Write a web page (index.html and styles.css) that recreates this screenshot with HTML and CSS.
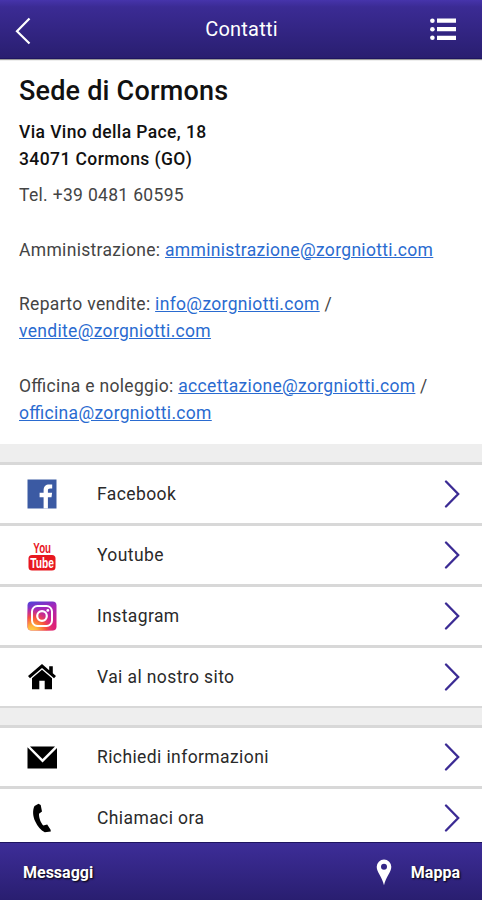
FILE: index.html
```html
<!DOCTYPE html>
<html lang="it">
<head>
    <meta charset="UTF-8">
    <meta name="viewport" content="width=device-width, initial-scale=1.0">
    <title>Contatti</title>
    <link rel="stylesheet" href="styles.css">
</head>
<body>
    <header class="topbar">
        <a class="back" href="#" aria-label="Indietro">
            <svg width="16" height="28" viewBox="0 0 16 28"><path d="M14.5 1.5 2 14.2 14.5 26.5" fill="none" stroke="#fff" stroke-width="2.2"/></svg>
        </a>
        <h1>Contatti</h1>
        <a class="menu" href="#" aria-label="Menu">
            <svg width="26" height="23" viewBox="0 0 26 23" fill="#fff">
                <circle cx="2.4" cy="2.7" r="2.3"/><circle cx="2.4" cy="11.2" r="2.3"/><circle cx="2.4" cy="19.8" r="2.3"/>
                <path d="M7 .6h19v4.2H7zM7 9.1h19v4.2H7zM7 17.7h19v4.2H7z"/>
            </svg>
        </a>
    </header>

    <main>
        <section class="info">
            <h2>Sede di Cormons</h2>
            <h3>Via Vino della Pace, 18<br>34071 Cormons (GO)</h3>
            <p>Tel. +39 0481 60595<br><br>
            Amministrazione: <a href="#">amministrazione@zorgniotti.com</a><br><br>
            Reparto vendite: <a href="#">info@zorgniotti.com</a> /<br><a href="#">vendite@zorgniotti.com</a><br><br>
            Officina e noleggio: <a href="#">accettazione@zorgniotti.com</a> /<br><a href="#">officina@zorgniotti.com</a></p>
        </section>

        <ul class="list">
            <li>
                <svg class="icon" viewBox="0 0 30 30"><path fill="#3b5aa3" d="M.5.5h29v29h-29z"/><path fill="#fff" d="M16.6 29.5V18.2h-4v-4.4h4v-2.6c0-4 2.1-5.8 5.6-5.8h3v4.1h-2.1c-1.7 0-2.2.7-2.2 2.1v2.2h4.2l-.6 4.4h-3.6v11.3z"/></svg>
                <span>Facebook</span>
                <svg class="arrow" viewBox="0 0 16 28"><path d="M2 1.5 14.2 14 2 26.5"/></svg>
            </li>
            <li>
                <svg class="icon" viewBox="0 0 30 30">
                    <rect x="1.500" y="15" width="27" height="15.500" rx="3.500" fill="#e8171f"/>
                    <text class="yt" transform="translate(15.200 12.500) scale(.63 1)" font-size="15.500" fill="#e8171f">You</text>
                    <text class="yt" transform="translate(15 28.300) scale(.66 1)" font-size="15.500" fill="#fff">Tube</text>
                </svg>
                <span>Youtube</span>
                <svg class="arrow" viewBox="0 0 16 28"><path d="M2 1.5 14.2 14 2 26.5"/></svg>
            </li>
            <li>
                <svg class="icon" viewBox="0 0 30 30">
                    <defs>
                        <linearGradient id="igBase" x1="0" y1="0" x2=".25" y2="1">
                            <stop offset="0" stop-color="#4b46dc"/><stop offset=".35" stop-color="#a427b8"/><stop offset="1" stop-color="#dd1f78"/>
                        </linearGradient>
                        <radialGradient id="igGlow" cx=".15" cy="1.05" r=".85">
                            <stop offset="0" stop-color="#ffdb4d"/><stop offset=".25" stop-color="#ffb33c"/><stop offset=".6" stop-color="#f7503c"/><stop offset="1" stop-color="#d92a8c" stop-opacity="0"/>
                        </radialGradient>
                    </defs>
                    <rect x=".5" y=".5" width="29" height="29" rx="4" fill="url(#igBase)"/>
                    <rect x=".5" y=".5" width="29" height="29" rx="4" fill="url(#igGlow)"/>
                    <rect x="5" y="5" width="20" height="20" rx="5.500" fill="none" stroke="#fff" stroke-width="2"/>
                    <circle cx="15" cy="15" r="4.800" fill="none" stroke="#fff" stroke-width="2.200"/>
                    <circle cx="20.800" cy="9.400" r="1.400" fill="#fff"/>
                </svg>
                <span>Instagram</span>
                <svg class="arrow" viewBox="0 0 16 28"><path d="M2 1.5 14.2 14 2 26.5"/></svg>
            </li>
            <li>
                <svg class="icon" viewBox="0 0 30 30"><path d="M15 2 1 14l2 2.300L15 6l12 10.300L29 14l-3.200-2.700V4.300h-3.600v4z"/><path d="M15 7.700 5 16.300v11h7.300v-8.500h5.400v8.500H25v-11z"/></svg>
                <span>Vai al nostro sito</span>
                <svg class="arrow" viewBox="0 0 16 28"><path d="M2 1.5 14.2 14 2 26.5"/></svg>
            </li>
        </ul>

        <ul class="list">
            <li>
                <svg class="icon" viewBox="0 0 30 30"><path d="M3 4.500h25L15.500 17z"/><path d="M.5 5.300 15.500 20.600 30 6v20.500H.5z"/></svg>
                <span>Richiedi informazioni</span>
                <svg class="arrow" viewBox="0 0 16 28"><path d="M2 1.5 14.2 14 2 26.5"/></svg>
            </li>
            <li>
                <svg class="icon" viewBox="0 0 30 30"><path d="M11.500.8 7.500 3C5.500 7 5.600 13 8.300 18.500c2.200 4.700 5.600 8.900 9.500 10.700l6-.7-.2-1.700-3.400-5.300-3.900 1c-2.500-2.800-4.500-7.700-4.300-11.800l3-2.200-1.300-6.500z"/></svg>
                <span>Chiamaci ora</span>
                <svg class="arrow" viewBox="0 0 16 28"><path d="M2 1.5 14.2 14 2 26.5"/></svg>
            </li>
        </ul>
    </main>

    <footer class="bottombar">
        <a href="#">Messaggi</a>
        <a href="#">
            <svg width="16" height="27" viewBox="0 0 16 27"><path fill="#fff" fill-rule="evenodd" d="M8 .5a7.300 7.300 0 0 0-7.300 7.300C.7 13 6 18 8 26.300 10 18 15.300 13 15.300 7.800A7.300 7.300 0 0 0 8 .5zm0 4.300a3 3 0 1 1 0 6 3 3 0 0 1 0-6z"/></svg>
            Mappa
        </a>
    </footer>
</body>
</html>
```
FILE: styles.css
```css
*{
    box-sizing: border-box;
}

body{
    margin:0;
    height:100vh;
    display:flex;
    flex-direction: column;
    overflow:hidden;
    background-color:#eee;
    font-family: Roboto, "Liberation Sans", sans-serif;
    color:#2a2a2a;
}

.topbar{
    flex:none;
    height:59px;
    padding:0 26px 0 15px;
    display:grid;
    grid-template-columns: 1fr auto 1fr;
    align-items:center;
    background: linear-gradient(#4634ab, #3b2b94 12%, #291e70);
    border-bottom:1px solid #1e1460;
    box-shadow:0 1px 1px rgba(0, 0, 0, 0.4);
    color:#fff;
    position:relative;
}

.topbar h1{
    margin:0 -6px 0 6px;
    font-size:20px;
    font-weight:400;
    letter-spacing:0.2px;
}

.topbar svg{
    display:block;
}

.back{
    padding-top:4px;
}

.menu{
    justify-self:end;
}

main{
    flex:1;
    min-height:0;
    overflow:hidden;
}

.info{
    height:385px;
    padding:14px 19px 0;
    background-color:#fff;
}

.info h2{
    margin:0;
    font-size:27px;
    line-height:36px;
    font-weight:500;
    letter-spacing:0.2px;
    color:#111;
}

.info h3{
    margin:10px 0 9px;
    font-size:17.5px;
    line-height:27.2px;
    font-weight:500;
    letter-spacing:0.4px;
    color:#111;
}

.info p{
    margin:0;
    font-size:17.5px;
    line-height:27.2px;
    letter-spacing:0.32px;
    font-feature-settings:"liga" 1;
    color:#444;
    white-space:nowrap;
}

.info a{
    color:#2a6bd0;
}

.list{
    list-style:none;
    margin:18px 0 0;
    padding:0;
    border-bottom:2px solid #d8d8d8;
}

.list + .list{
    margin-top:17px;
}

.list li{
    height:61px;
    padding:0 22px 0 27px;
    display:flex;
    align-items:center;
    background-color:#fff;
    border-top:3px solid #d8d8d8;
    font-size:17.5px;
    letter-spacing:0.4px;
}

.list span{
    flex:1;
    margin-left:40px;
}

.icon{
    width:30px;
    height:30px;
    overflow:visible;
}

.yt{
    font-family: "Liberation Sans", sans-serif;
    font-weight:700;
    letter-spacing:0;
    text-anchor:middle;
}

.arrow{
    width:16px;
    height:28px;
    fill:none;
    stroke:#3b2b94;
    stroke-width:2.3;
    stroke-linecap:round;
}

.bottombar{
    flex:none;
    height:58px;
    padding:2px 22px 0 23px;
    display:flex;
    justify-content: space-between;
    align-items:center;
    background: linear-gradient(#3d2d98, #291e70);
    border-top:1px solid #1e1460;
}

.bottombar a{
    display:flex;
    align-items:center;
    gap:19px;
    color:#fff;
    font-size:16px;
    font-weight:700;
    text-decoration:none;
    text-shadow:1px 1px 2px #000;
}
```
